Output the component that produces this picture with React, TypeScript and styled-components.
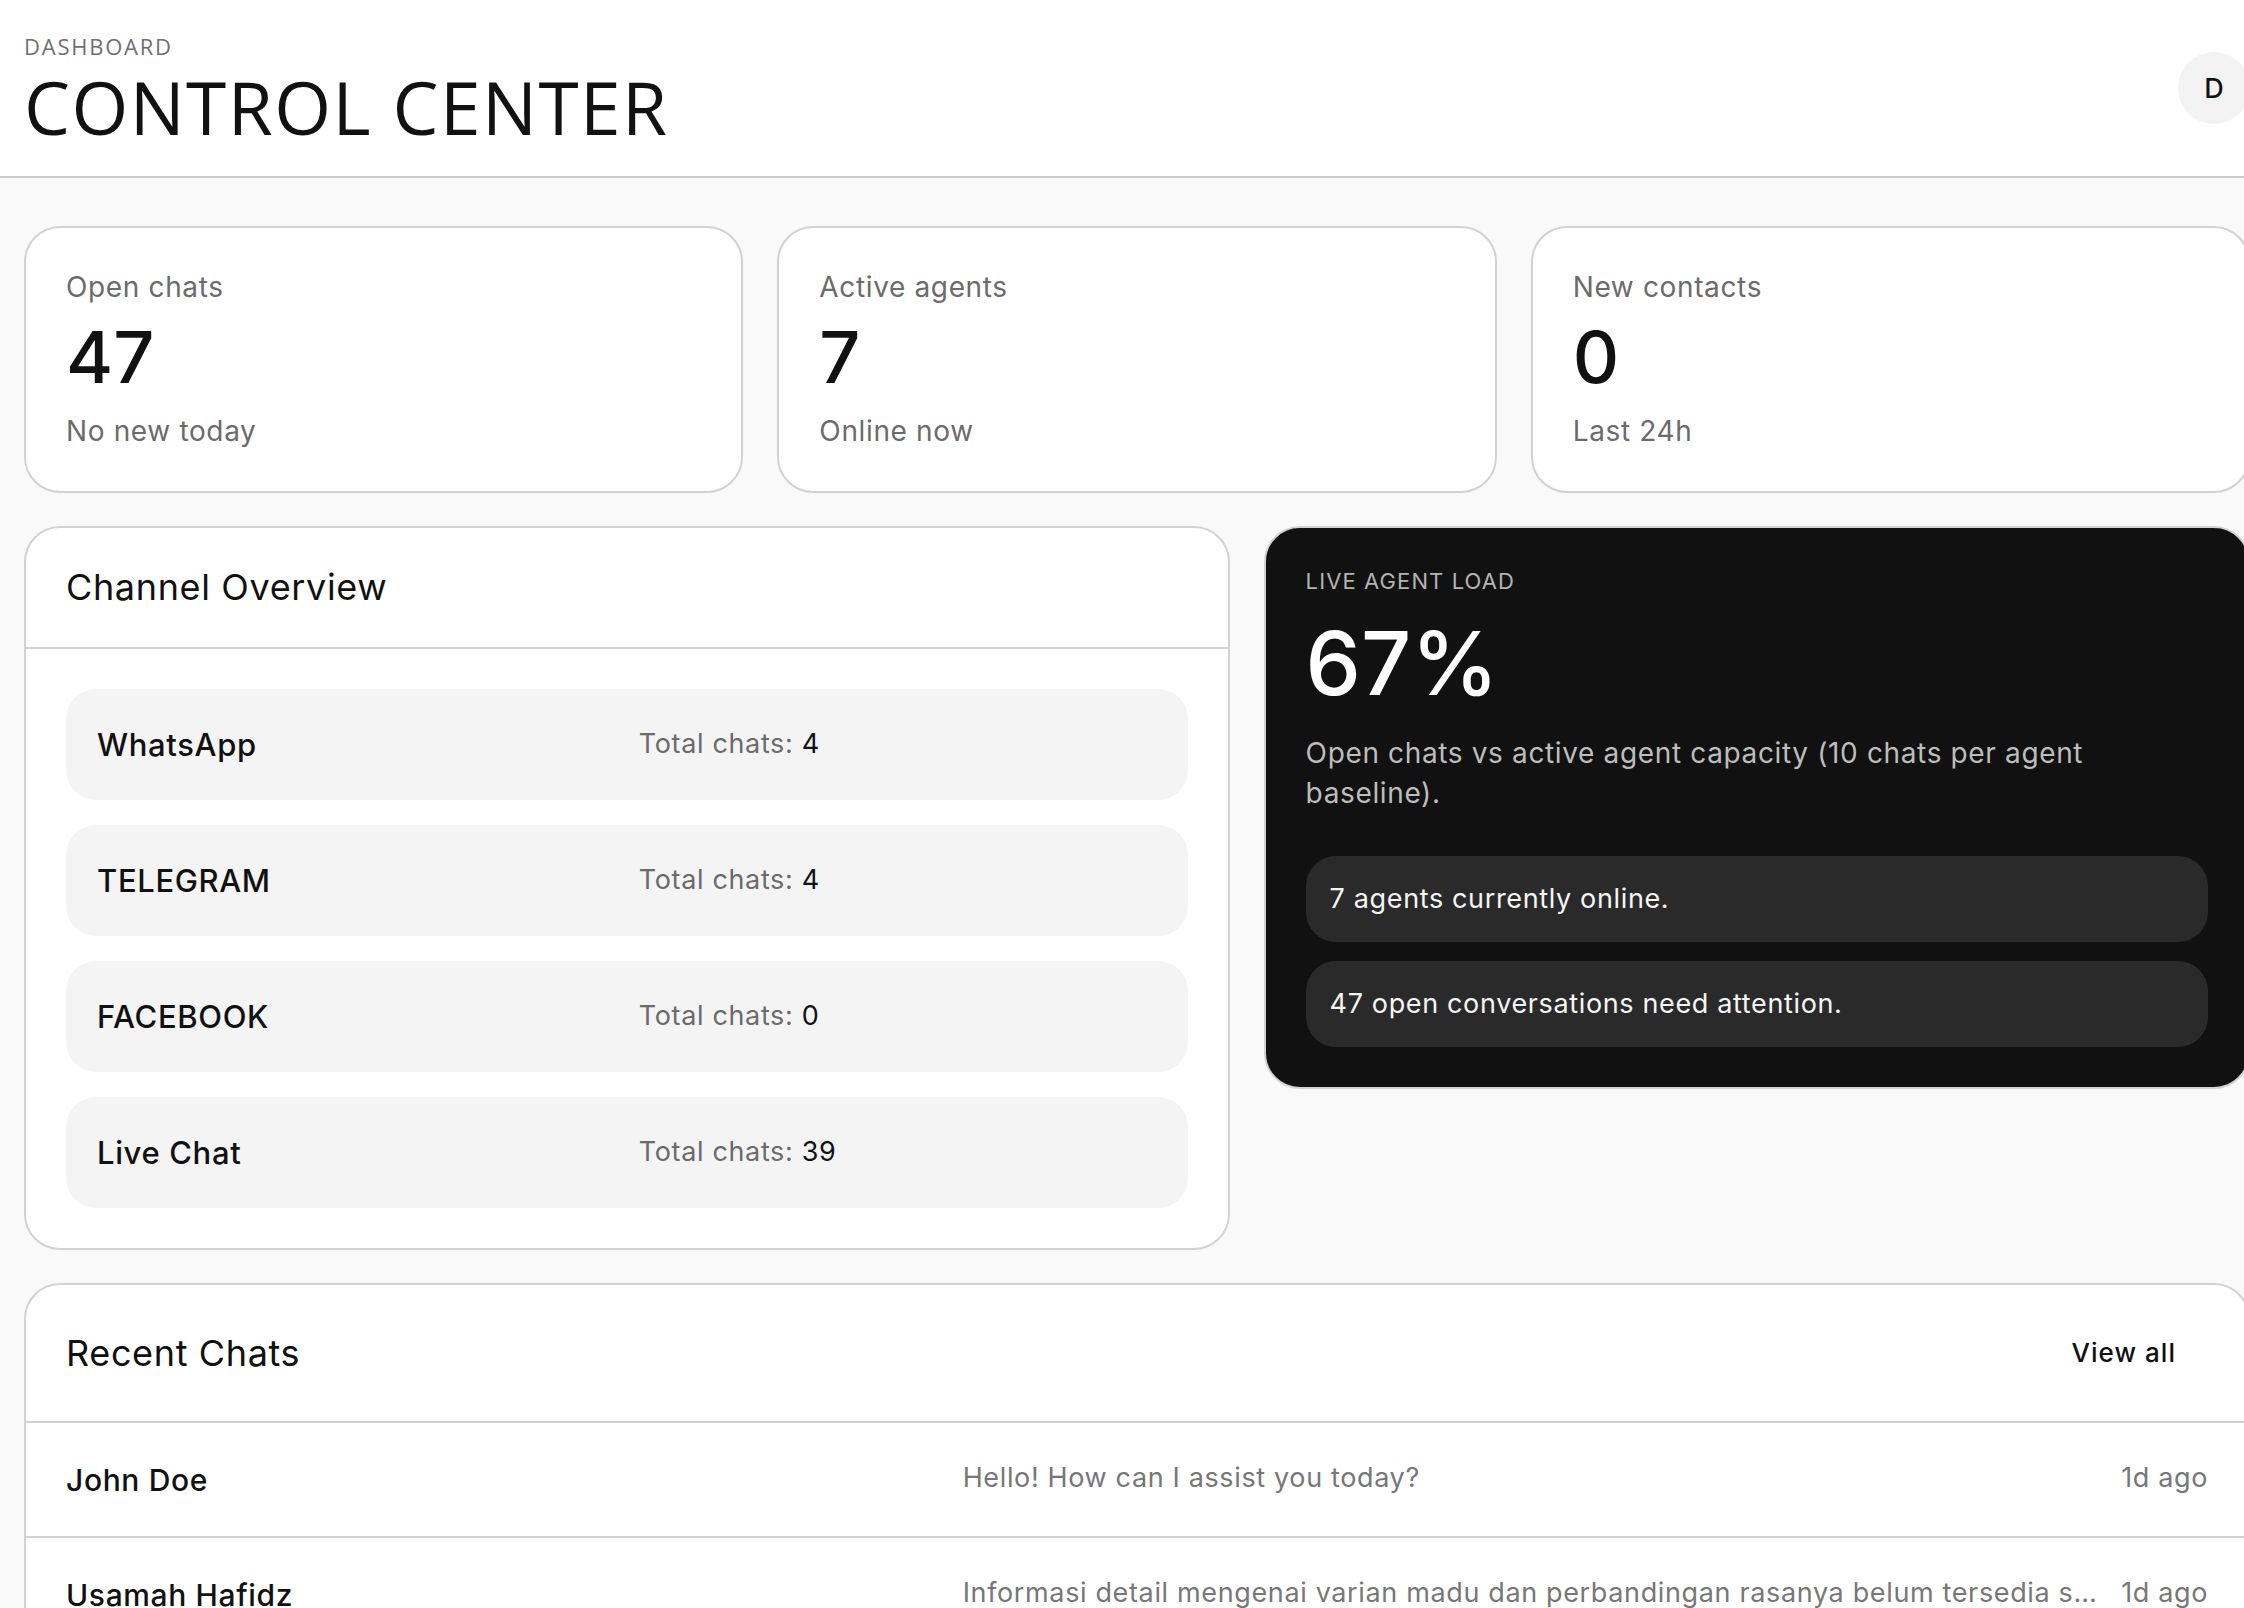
import React from 'react';
import styled, { createGlobalStyle } from 'styled-components';

const GlobalStyle = createGlobalStyle`
	* {
		box-sizing: border-box;
	}
	html,
	body {
		margin: 0;
		padding: 0;
		overflow: hidden;
		background: #f9f9f9;
	}
	body {
		font-family: Inter, 'Open Sans', sans-serif;
		letter-spacing: 0.04em;
		color: #111;
	}
`;

const Page = styled.div`
	width: 2274px;
	min-height: 100vh;
	background: #f9f9f9;
`;

const TopBar = styled.header`
	display: flex;
	align-items: flex-start;
	justify-content: space-between;
	padding: 36px 24px 20px;
	background: #fff;
	border-bottom: 2px solid #cbcbcb;
`;

const Eyebrow = styled.div`
	font-family: 'Open Sans', sans-serif;
	font-size: 22px;
	line-height: 21px;
	letter-spacing: 0.08em;
	text-transform: uppercase;
	color: #6f6f6f;
`;

const PageTitle = styled.h1`
	font-family: 'Open Sans', sans-serif;
	font-size: 73px;
	font-weight: 400;
	line-height: 1.36;
	letter-spacing: 0.02em;
	color: #111;
	margin: 0;
`;

const Avatar = styled.div`
	width: 72px;
	height: 72px;
	margin-top: 16px;
	border-radius: 50%;
	background: #f3f3f3;
	display: flex;
	align-items: center;
	justify-content: center;
	font-size: 27px;
	font-weight: 500;
	letter-spacing: 0;
	color: #111;
`;

const Main = styled.main`
	display: flex;
	flex-direction: column;
	gap: 33px;
	padding: 48px 24px;
`;

const StatGrid = styled.section`
	display: grid;
	grid-template-columns: repeat(3, minmax(0, 1fr));
	gap: 34px;
`;

const Card = styled.div`
	background: #fff;
	border: 2px solid #d2d2d2;
	border-radius: 36px;
`;

const StatCard = styled(Card)`
	padding: 40px;
`;

const StatLabel = styled.div`
	font-size: 28px;
	line-height: 1.4;
	color: #6b6b6b;
`;

const StatValue = styled.div`
	font-size: 72px;
	font-weight: 500;
	line-height: 1.4;
	letter-spacing: 0;
	color: #111;
`;

const StatNote = styled.div`
	font-size: 28px;
	line-height: 1.4;
	color: #6b6b6b;
	margin-top: 4px;
`;

const MiddleGrid = styled.section`
	display: grid;
	grid-template-columns: minmax(0, 1.1fr) minmax(0, 0.9fr);
	gap: 34px;
	align-items: start;
`;

const Panel = styled(Card)`
	overflow: hidden;
`;

const PanelHeader = styled.div<{ $pad: string }>`
	display: flex;
	align-items: center;
	justify-content: space-between;
	padding: ${(props) => props.$pad};
	border-bottom: 2px solid #d2d2d2;
`;

const PanelTitle = styled.h2`
	font-size: 36px;
	font-weight: 400;
	line-height: 1.4;
	margin: 0;
	color: #111;
`;

const ChannelList = styled.div`
	display: flex;
	flex-direction: column;
	gap: 25px;
	padding: 40px;
`;

const ChannelRow = styled.div`
	display: grid;
	grid-template-columns: 1fr 1fr;
	gap: 24px;
	align-items: center;
	padding: 34px 31px;
	background: #f4f4f4;
	border-radius: 30px;
`;

const ChannelName = styled.div`
	font-size: 31px;
	font-weight: 500;
	line-height: 43px;
	color: #111;
`;

const ChannelCount = styled.div`
	font-size: 27px;
	line-height: 1.4;
	color: #6b6b6b;
	& > span {
		color: #111;
	}
`;

const LoadCard = styled(Card)`
	background: #111;
	color: #fff;
	padding: 38px 40px 40px;
`;

const LoadLabel = styled.div`
	font-size: 22px;
	line-height: 31px;
	letter-spacing: 0.05em;
	text-transform: uppercase;
	color: #b3b3b3;
`;

const LoadValue = styled.div`
	font-size: 88px;
	font-weight: 500;
	line-height: 1.2;
	letter-spacing: 0;
	margin-top: 14px;
`;

const LoadText = styled.p`
	font-size: 28px;
	line-height: 40px;
	color: #bdbdbd;
	margin: 16px 0 0;
`;

const NoteList = styled.div`
	display: flex;
	flex-direction: column;
	gap: 19px;
	margin-top: 43px;
`;

const Note = styled.div`
	background: #2a2a2a;
	border-radius: 30px;
	padding: 24px;
	font-size: 27px;
	line-height: 38px;
	color: #f5f5f5;
`;

const ViewAll = styled.button`
	background: none;
	border: none;
	font-family: inherit;
	font-size: 26px;
	font-weight: 500;
	line-height: 38px;
	letter-spacing: 0.04em;
	padding: 8px 32px;
	color: #111;
	cursor: pointer;
`;

const ChatRow = styled.div`
	display: grid;
	grid-template-columns: minmax(0, 1fr) minmax(0, 1.3fr) auto;
	gap: 24px;
	align-items: start;
	padding: 36px 40px 35px;
	& + & {
		border-top: 2px solid #d2d2d2;
	}
`;

const ChatName = styled.div`
	font-size: 30px;
	font-weight: 500;
	line-height: 42px;
	color: #111;
`;

const ChatMessage = styled.div`
	font-size: 27px;
	line-height: 1.4;
	color: #777;
	white-space: nowrap;
	overflow: hidden;
	text-overflow: ellipsis;
`;

const ChatTime = styled.div`
	font-size: 27px;
	line-height: 1.4;
	color: #777;
	white-space: nowrap;
`;

const stats = [
	{ label: 'Open chats', value: '47', note: 'No new today' },
	{ label: 'Active agents', value: '7', note: 'Online now' },
	{ label: 'New contacts', value: '0', note: 'Last 24h' },
];

const channels = [
	{ name: 'WhatsApp', total: 4 },
	{ name: 'TELEGRAM', total: 4 },
	{ name: 'FACEBOOK', total: 0 },
	{ name: 'Live Chat', total: 39 },
];

const chats = [
	{ name: 'John Doe', message: 'Hello! How can I assist you today?', time: '1d ago' },
	{
		name: 'Usamah Hafidz',
		message: 'Informasi detail mengenai varian madu dan perbandingan rasanya belum tersedia saat ini.',
		time: '1d ago',
	},
];

const App = () => {
	return (
		<Page>
			<GlobalStyle />
			<TopBar>
				<div>
					<Eyebrow>Dashboard</Eyebrow>
					<PageTitle>CONTROL CENTER</PageTitle>
				</div>
				<Avatar>D</Avatar>
			</TopBar>

			<Main>
				<StatGrid>
					{stats.map((stat) => (
						<StatCard key={stat.label}>
							<StatLabel>{stat.label}</StatLabel>
							<StatValue>{stat.value}</StatValue>
							<StatNote>{stat.note}</StatNote>
						</StatCard>
					))}
				</StatGrid>

				<MiddleGrid>
					<Panel>
						<PanelHeader $pad="34px 40px">
							<PanelTitle>Channel Overview</PanelTitle>
						</PanelHeader>
						<ChannelList>
							{channels.map((channel) => (
								<ChannelRow key={channel.name}>
									<ChannelName>{channel.name}</ChannelName>
									<ChannelCount>
										Total chats: <span>{channel.total}</span>
									</ChannelCount>
								</ChannelRow>
							))}
						</ChannelList>
					</Panel>

					<LoadCard>
						<LoadLabel>Live agent load</LoadLabel>
						<LoadValue>67%</LoadValue>
						<LoadText>Open chats vs active agent capacity (10 chats per agent baseline).</LoadText>
						<NoteList>
							<Note>7 agents currently online.</Note>
							<Note>47 open conversations need attention.</Note>
						</NoteList>
					</LoadCard>
				</MiddleGrid>

				<Panel>
					<PanelHeader $pad="41px 40px">
						<PanelTitle>Recent Chats</PanelTitle>
						<ViewAll>View all</ViewAll>
					</PanelHeader>
					{chats.map((chat) => (
						<ChatRow key={chat.name}>
							<ChatName>{chat.name}</ChatName>
							<ChatMessage>{chat.message}</ChatMessage>
							<ChatTime>{chat.time}</ChatTime>
						</ChatRow>
					))}
				</Panel>
			</Main>
		</Page>
	);
};

export default App;
